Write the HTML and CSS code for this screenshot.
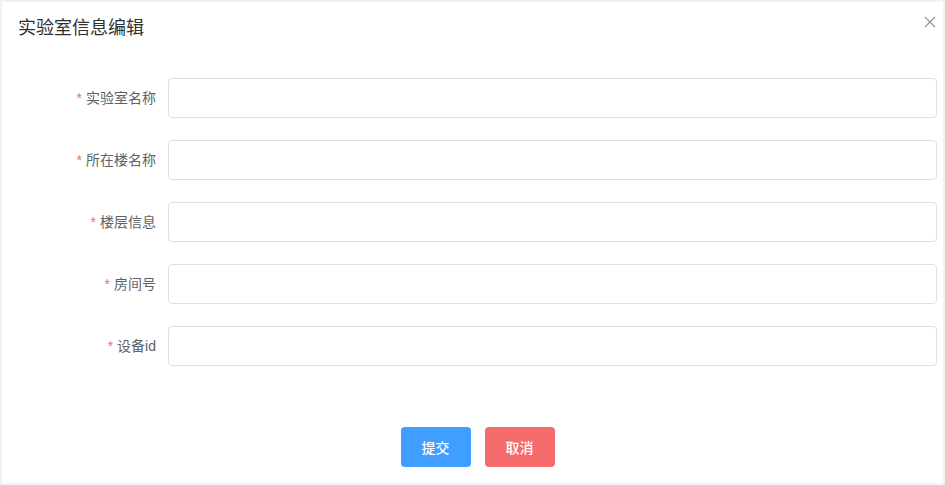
FILE: index.html
```html
<!DOCTYPE html>
<html lang="zh-CN">
<head>
  <meta charset="UTF-8">
  <meta name="viewport" content="width=device-width, initial-scale=1.0">
  <title>实验室信息编辑</title>
  <link rel="stylesheet" href="styles.css">
</head>
<body>
  <div class="dialog">
    <div class="dialog-header">
      <span class="dialog-title">实验室信息编辑</span>
      <button class="dialog-close" aria-label="Close">
        <svg width="12" height="12" viewBox="0 0 12 12"><path d="M1 1L11 11M11 1L1 11" stroke="#909399" stroke-width="1.2" fill="none"/></svg>
      </button>
    </div>

    <form class="dialog-body">
      <div class="form-item">
        <label class="form-label" for="labName"><span class="req">*</span>实验室名称</label>
        <input class="form-input" id="labName" type="text">
      </div>
      <div class="form-item">
        <label class="form-label" for="building"><span class="req">*</span>所在楼名称</label>
        <input class="form-input" id="building" type="text">
      </div>
      <div class="form-item">
        <label class="form-label" for="floor"><span class="req">*</span>楼层信息</label>
        <input class="form-input" id="floor" type="text">
      </div>
      <div class="form-item">
        <label class="form-label" for="room"><span class="req">*</span>房间号</label>
        <input class="form-input" id="room" type="text">
      </div>
      <div class="form-item">
        <label class="form-label" for="deviceId"><span class="req">*</span>设备id</label>
        <input class="form-input" id="deviceId" type="text">
      </div>
    </form>

    <div class="dialog-footer">
      <button class="btn btn-primary">提交</button>
      <button class="btn btn-danger">取消</button>
    </div>
  </div>
</body>
</html>
```

FILE: styles.css
```css
html, body { margin: 0; height: 100%; }
body { padding: 2px; box-sizing: border-box; background: #f2f2f2; font-family: "Helvetica Neue", Helvetica, "Noto Sans CJK SC", sans-serif; }

.dialog { background: #fff; width: 941px; height: 481px; display: flex; flex-direction: column; }

.dialog-header { display: flex; justify-content: space-between; align-items: flex-start; padding: 14px 7px 10px 16px; }
.dialog-title { font-size: 18px; line-height: 24px; color: #303133; }
.dialog-close { border: 0; background: none; padding: 0; width: 12px; height: 12px; cursor: pointer; display: block; }
.dialog-close svg { display: block; }

.dialog-body { padding: 28px 6px 0 0; margin: 0; }
.form-item { display: flex; margin-bottom: 22px; }
.form-label { width: 166px; box-sizing: border-box; padding-right: 12px; text-align: right; font-size: 14px; line-height: 40px; color: #606266; }
.req { color: #f56c6c; margin-right: 4px; }
.form-input { flex: 1; height: 40px; box-sizing: border-box; border: 1px solid #dcdfe6; border-radius: 4px; padding: 0 15px; font-size: 14px; color: #606266; outline: none; font-family: inherit; }

.dialog-footer { margin-top: auto; display: flex; justify-content: center; gap: 14px; padding: 0 0 16px 10px; }
.btn { width: 70px; height: 40px; border: 0; border-radius: 4px; color: #fff; font-size: 14px; font-weight: 500; font-family: inherit; cursor: pointer; }
.btn-primary { background: #409eff; }
.btn-danger { background: #f56c6c; }
```
